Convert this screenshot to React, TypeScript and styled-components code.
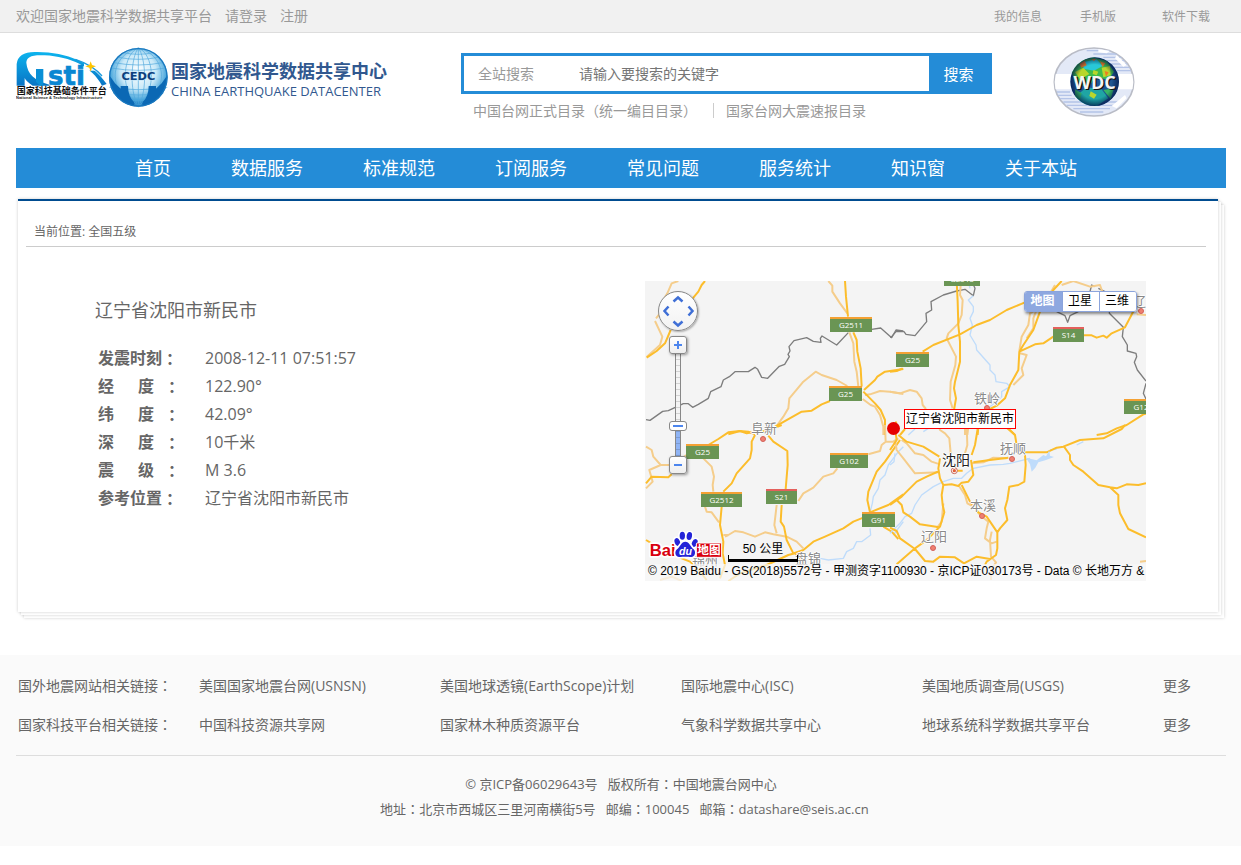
import React from "react";
import styled, { createGlobalStyle, css } from "styled-components";

const sans = `"Open Sans", "Noto Sans CJK SC", sans-serif`;
const arial = `"Liberation Sans", "Noto Sans CJK SC", sans-serif`;
const blue = "#248cd7";

const GlobalStyle = createGlobalStyle`
  *, *::before, *::after { box-sizing: border-box; }
  body { margin: 0; background: #fff; color: #666; font: 14px/20px ${sans}; }
  a { color: inherit; text-decoration: none; }
  ul { list-style: none; margin: 0; padding: 0; }
  p, h1 { margin: 0; }
  button, input, select { font-family: inherit; }
`;

/* Full-width punctuation centred in its box */
const Mark = styled.span`
  font-family: "Noto Sans CJK TC", sans-serif;
  line-height: 1;
`;

const TopBar = styled.div`
  display: flex;
  justify-content: space-between;
  height: 33px;
  padding: 0 31px 0 16px;
  background: #f1f1f1;
  border-bottom: 1px solid #ddd;
  color: #999;
  line-height: 32px;
  white-space: nowrap;
`;
const Greeting = styled.div`
  display: flex;
  gap: 13px;
`;
const TopLinks = styled.div`
  display: flex;
  gap: 38px;
  font-size: 12px;
  line-height: 34px;
  a:last-child { padding-left: 8px; }
`;

const Wrap = styled.div`
  padding: 0 15px 0 16px;
`;

const Header = styled.header`
  display: flex;
  height: 115px;
  padding-top: 14px;
`;
const Brand = styled.a`
  display: flex;
  gap: 3px;
  width: 445px;
  flex: none;
  white-space: nowrap;
`;
const BrandText = styled.span`
  display: flex;
  flex-direction: column;
  padding-top: 14px;
  color: #31588f;
`;
const BrandZh = styled.span`
  font-size: 18px;
  line-height: 20px;
  font-weight: 700;
`;
const BrandEn = styled.span`
  font: 13px/20px "Open Sans", sans-serif;
`;

const SearchArea = styled.div`
  flex: none;
  width: 531px;
  padding-top: 6px;
`;
const SearchForm = styled.form`
  display: flex;
  height: 41px;
  border: 3px solid ${blue};
  border-right: 0;
`;
const Scope = styled.select`
  appearance: none;
  width: 100px;
  padding: 0 0 0 14px;
  border: 0;
  background: #fff;
  color: #999;
  font-size: 14px;
`;
const Keyword = styled.input`
  flex: 1;
  min-width: 0;
  padding: 0 15px;
  border: 0;
  font-size: 14px;
  &::placeholder { color: #757575; }
`;
const SearchButton = styled.button`
  width: 63px;
  margin: -3px 0;
  padding: 0 4px 0 0;
  border: 0;
  background: ${blue};
  color: #fff;
  font-size: 15px;
`;
const QuickLinks = styled.ul`
  display: flex;
  padding: 7px 0 0 12px;
  color: #999;
  white-space: nowrap;
  li + li {
    margin-left: 16px;
  }
  li + li::before {
    content: "";
    display: inline-block;
    width: 1px;
    height: 15px;
    margin-right: 12px;
    background: #ccc;
    vertical-align: -2px;
  }
`;
const WdcLink = styled.a`
  margin-left: 60px;
  svg { display: block; }
`;

const Nav = styled.nav`
  display: flex;
  gap: 60px;
  height: 40px;
  padding-left: 119px;
  background: ${blue};
  color: #fff;
  font-size: 18px;
  line-height: 41px;
  white-space: nowrap;
`;

const Panel = styled.main`
  height: 413px;
  margin: 11px 8px 0 2px;
  padding: 0 12px 0 8px;
  border-top: 2px solid #004c90;
  background: #fff;
  box-shadow:
    0 0 3px rgba(0, 0, 0, 0.2),
    3px 3px 0 #fff,
    3px 3px 3px rgba(0, 0, 0, 0.2),
    6px 6px 0 #fff,
    6px 6px 3px rgba(0, 0, 0, 0.2);
`;
const Crumb = styled.div`
  height: 46px;
  padding: 21px 8px 0;
  border-bottom: 1px solid #ccc;
  font-size: 12px;
  line-height: 20px;
`;
const Columns = styled.div`
  display: flex;
  padding: 34px 60px 0 69px;
`;
const Info = styled.section`
  flex: 1;
`;
const Title = styled.h1`
  font-size: 18px;
  line-height: 28px;
  font-weight: 400;
  padding-top: 15px;
`;
const Facts = styled.table`
  margin: 20px 0 0 3px;
  border-collapse: collapse;
  font-size: 16px;
  line-height: 28px;
  th, td { height: 28px; padding: 0; text-align: left; }
  th { width: 107px; }
`;
const Label = styled.span`
  display: flex;
  align-items: center;
  height: 28px;
`;
const First = styled.span`
  margin-right: 24px;
`;
const Second = styled.span`
  margin-right: 10px;
`;

/* ---- map ---- */
const MapBox = styled.section`
  position: relative;
  flex: none;
  width: 501px;
  height: 300px;
  overflow: hidden;
  background: #f4f4f4;
  font-family: ${arial};
  > svg { display: block; }
`;
type At = { $x: number; $y: number };
const at = css<At>`
  position: absolute;
  left: ${(p) => p.$x}px;
  top: ${(p) => p.$y}px;
`;
const Sign = styled.span<At & { $w: number; $red?: boolean }>`
  ${at}
  width: ${(p) => p.$w}px;
  height: 15px;
  border-top: 2px solid ${(p) => (p.$red ? "#e4605c" : "#f4a133")};
  background: #6a9554;
  color: #fff;
  font: 8px/11px "Open Sans", sans-serif;
  text-align: center;
`;
const City = styled.span<At & { $major?: boolean }>`
  ${at}
  color: ${(p) => (p.$major ? "#222" : "#8a8a8a")};
  font-size: ${(p) => (p.$major ? 14 : 13)}px;
  line-height: 18px;
  white-space: nowrap;
  text-shadow: 1px 0 #fff, -1px 0 #fff, 0 1px #fff, 0 -1px #fff;
`;
const Dot = styled.i<At>`
  ${at}
  width: 6px;
  height: 6px;
  border: 1px solid #d2605a;
  border-radius: 50%;
  background: #f08070;
`;
const Epicentre = styled.i<At>`
  ${at}
  width: 13px;
  height: 13px;
  border-radius: 50%;
  background: #e60000;
`;
const Callout = styled.span<At>`
  ${at}
  padding: 1px;
  border: 1px solid #f00;
  background: #fff;
  color: #000;
  font-size: 12px;
  line-height: 16px;
  white-space: nowrap;
`;
const PanWheel = styled.div<At>`
  ${at}
  width: 40px;
  height: 40px;
  border: 1px solid #888;
  border-radius: 50%;
  background: linear-gradient(#fff, #f2f2f2);
  box-shadow: 1px 1px 2px rgba(0, 0, 0, 0.3);
`;
const PanButton = styled.button<At & { $turn: number }>`
  ${at}
  width: 12px;
  height: 12px;
  padding: 0;
  border: 0;
  background: none;
  svg { display: block; transform: rotate(${(p) => p.$turn}deg); }
`;
const ZoomButton = styled.button<At>`
  ${at}
  display: flex;
  align-items: center;
  justify-content: center;
  width: 18px;
  height: 18px;
  padding: 0;
  border: 1px solid #888;
  border-radius: 3px;
  background: linear-gradient(#fff, #eee);
  box-shadow: 1px 1px 3px rgba(0, 0, 0, 0.4);
`;
const ZoomSlider = styled.input<At>`
  ${at}
  appearance: none;
  writing-mode: vertical-lr;
  direction: rtl;
  width: 18px;
  height: 104px;
  margin: 0;
  background: none;
  &::-webkit-slider-runnable-track {
    width: 6px;
    height: 104px;
    border: solid #888;
    border-width: 0 1px;
    background:
      repeating-linear-gradient(transparent 0 5px, rgba(0, 0, 0, 0.14) 5px 6px),
      linear-gradient(#f4f4f4 0 72px, #8fb4f5 72px);
  }
  &::-webkit-slider-thumb {
    appearance: none;
    width: 18px;
    height: 10px;
    margin-left: -7px;
    border: 1px solid #888;
    border-radius: 3px;
    background: linear-gradient(#4d86ee, #4d86ee) center / 10px 2px no-repeat #fff;
  }
`;
const TypeSwitch = styled.div`
  position: absolute;
  top: 10px;
  right: 9px;
  display: flex;
  height: 21px;
  border: 1px solid #8ba4dc;
  border-radius: 3px;
  overflow: hidden;
  box-shadow: 1px 2px 3px rgba(0, 0, 0, 0.45);
`;
const TypeButton = styled.button<{ $on?: boolean }>`
  width: 37px;
  padding: 0 2px 0 0;
  border: 0;
  background: ${(p) => (p.$on ? "#8ea8e0" : "#fff")};
  color: ${(p) => (p.$on ? "#fff" : "#000")};
  font-size: 12px;
  line-height: 17px;
  font-weight: ${(p) => (p.$on ? 700 : 400)};
  & + & { border-left: 1px solid #8ba4dc; }
`;
const Scale = styled.div<At>`
  ${at}
  width: 70px;
  height: 22px;
  color: #000;
  font-size: 12px;
  line-height: 16px;
  text-align: center;
  &::after {
    content: "";
    display: block;
    height: 7px;
    margin-top: -2px;
    border: solid #000;
    border-width: 0 1px 3px;
  }
`;
const Copyright = styled.div`
  position: absolute;
  left: 0;
  right: 0;
  bottom: 0;
  height: 17px;
  padding-left: 3px;
  background: rgba(248, 248, 248, 0.72);
  color: #000;
  font-size: 12px;
  line-height: 15px;
  white-space: nowrap;
`;
const MapLogo = styled.svg<At>`
  ${at}
`;

/* ---- footer ---- */
const Footer = styled.footer`
  margin-top: 43px;
  height: 191px;
  padding: 11px 15px 0 16px;
  background: #fafafa;
`;
const LinkRow = styled.div`
  display: grid;
  grid-template-columns: 181fr 241fr 241fr 241fr 241fr 63fr;
  height: 39px;
  padding-left: 2px;
  line-height: 39px;
  white-space: nowrap;
`;
const Legal = styled.div`
  margin-top: 11px;
  padding-top: 16px;
  border-top: 1px solid #ddd;
  font-size: 13px;
  line-height: 25px;
  text-align: center;
  p { height: 25px; white-space: pre; }
`;

const yellow = "#fcbd2b";
const pale = "#f5cd8b";
const river = "#bfdcfb";

type Tile = { dx: number; dy: number; border: string; water: string; minor: string; major: string };

/* Map tiles, three drawing units to a screen pixel */
const tiles: Tile[] = [
  {
    dx: -15, dy: -18,
    border: "M18 434L30 436 68 409 85 407 130 386 145 386 158 397 175 388 205 370 212 350 243 335 250 315 268 305 285 290 325 290 345 277 353 283 365 307 383 310 418 274 434 268 448 245 444 238 450 228 447 215 462 197 500 188 520 199 543 202 541 190 546 183 590 210 625 173M695 163L722 159 755 188 768 165 790 168",
    water: "",
    minor: "M115 18L95 25 82 55 70 75 60 115 48 130M45 138L67 185 60 210 20 246M565 18L577 32 577 50 600 85 622 115M628 172L640 205 643 260 650 290 655 335M675 360L690 358 720 348 750 350 790 357M668 372L692 390 705 395 720 420 730 455 730 480M412 450L430 425 445 400 448 370 490 320 527 290 545 300 590 315 622 333",
    major: "M195 18L185 30 175 50 150 80M92 165L75 205 50 228 20 248M615 18L618 65 624 125M640 172L650 195 652 230 662 280 665 335M672 345L705 315 712 305 735 290 790 282M670 350L705 385 722 405 735 435 735 480M400 458L485 410 515 407 545 388 570 378M265 478L300 468 325 470 345 478",
  },
  {
    dx: 735, dy: -18,
    border: "M0 187L5 185 18 170 42 170 48 178 75 182 110 140 108 115 125 105 123 80 160 60 200 48 225 43 250 62 255 40 245 18M500 110L525 122 533 142 540 122 565 110M570 70L600 50 605 30 615 35M625 40L645 50 660 80 658 115 700 157 697 185 712 210 712 228 738 235 740 245 733 262 742 285 768 318M768 325L760 355 768 372",
    water: "M250 62L235 75 250 95 250 110 240 130 247 150 240 180 258 210 260 225 300 270 300 285 315 300 318 320 350 325 360 335 335 350 335 365 300 395M235 18L240 40M55 480L75 462M100 470L115 460",
    minor: "M212 30L210 60 218 75 215 120 205 145 175 175 170 190 198 245 196 270 182 320 180 375 188 400M495 30L460 90 420 115 415 150 395 185 388 228M445 90L430 130 430 160 410 190M390 235L410 240 395 280 400 300 370 330M0 350L30 355 60 345 80 350 95 370 98 390 108 402M515 30L550 18 600 35 630 30 640 60M740 118L768 120M225 455L225 480M235 455L232 480",
    major: "M200 18L203 80 205 150 210 200 210 260 195 320 192 340 198 370 192 405M0 290L20 288 38 280M98 230L130 210 210 178 260 150 300 135 350 105 405 82M515 18L490 45 450 110 430 165 400 210 388 230 385 285 360 330 345 370 320 392 300 402M388 230L435 208 460 205 490 185M582 181L605 181 620 188 640 182 650 188 665 175 705 157 735 100M790 410L760 418 710 450 680 460 650 475 620 480M265 455L263 480M30 480L45 462M355 460L375 480M0 460L20 440",
  },
  {
    dx: -15, dy: 432,
    border: "",
    water: "M790 65L775 80 760 100 745 120 735 150 720 165 715 190 700 215 697 235 690 262M690 310L692 330 665 350 650 350 640 370 620 380 610 400 565 405 540 400M760 330L790 290",
    minor: "M18 65L35 75 40 95 62 120 92 120 140 90M18 190L38 170 28 135 62 120M190 100L215 125 222 155 218 180 220 200M195 245L200 260 215 262 237 292M250 330L265 330 285 318 310 322 345 335 375 322 400 328 440 335 470 350 490 370M410 240L403 300 410 325M475 228L490 205 520 188 550 155 580 145 592 130M685 88L720 78 725 60 737 50 735 0M735 50L760 50 775 40M60 465L95 455 125 468M265 330L255 335",
    major: "M18 175L35 155 85 157 95 148M205 60L235 42 265 22 300 18 320 25 345 20 380 18 425 0M345 30L335 50 335 75 330 100 290 145 275 175 250 200M385 32L400 50 442 78 443 120 437 192M245 245L240 300 250 350 248 385 255 420 240 460M18 345L60 370 100 390 150 410 180 440 200 465M425 240L422 290 432 305 440 345 460 385 490 375 520 350 555 335 610 310 640 290 670 278M265 468L300 445 380 420 445 390 465 385 490 410 510 440M780 45L735 110 710 140 685 200 682 225 690 262 745 240 790 208M730 305L755 320 775 342",
  },
  {
    dx: 735, dy: 432,
    border: "",
    water: "M0 325L30 295 45 275 65 265 75 240 95 210 130 185 160 170 190 160 215 160 230 145 250 130 300 120 340 118 360 115 420 100M0 120L12 110 15 85M480 75L500 72M560 60L580 50",
    minor: "M15 45L20 75 40 100 75 145 147 142M35 45L50 55 75 85 100 90 125 110 150 118M145 0L150 15 165 25 178 40 182 85M230 0L232 60 225 85M245 115L280 112 310 98 350 100M205 180L225 210 232 235 250 245 270 270 295 290 290 310 285 340 305 355 320 350M305 320L300 345 303 395 318 412 303 435 303 465M160 235L155 290 140 310M750 410L768 408",
    major: "M25 30L50 50 100 65 148 95M15 10L20 45 0 75M265 0L255 60 245 90M250 112L300 105 355 98M405 82L470 82 500 68 520 65 570 45 640 40 695 12 705 0M352 10L375 30 380 60M405 90L407 120 403 170 385 180 358 185 352 225 345 250 352 285 330 310 322 322 322 370 318 390 290 410 285 420M522 65L540 90 540 105 550 120 580 140 625 180 660 187 685 210 685 240 690 265 715 312 768 337M660 187L680 190 710 178 745 180 768 175M150 100L145 130 150 160 160 180 185 178 205 183 215 173 235 170 250 150 243 105M148 138L110 155 80 170 35 215 0 240M160 180L155 210 158 240 163 262 150 305 110 345 75 370 20 418M20 225L35 240 40 262 60 275 90 298 148 307M0 308L20 318 30 340 75 372 105 408 130 410 150 395 195 397 222 415 260 395 300 402M215 180L240 230 265 262 290 275 322 322M198 137L218 137",
  },
];

function Terrain() {
  return (
    <svg width="501" height="300" viewBox="0 0 1503 900" fill="none" strokeLinejoin="round" aria-hidden="true">
      {tiles.map((t, i) => (
        <g key={i} transform={`translate(${t.dx} ${t.dy})`}>
          <path d={t.border} stroke="#7d7d7d" strokeWidth="4" />
          <path d={t.water} stroke={river} strokeWidth="4" />
          <path d={t.minor} stroke={pale} strokeWidth="6" />
          <path d={t.major} stroke={yellow} strokeWidth="6" />
        </g>
      ))}
      <path transform="translate(735 432)" fill={river} d="M408 98L440 106 460 90 468 94 478 76 480 92 492 96 466 106 445 112 436 128 425 140 420 118Z" />
      <circle cx="928" cy="569" r="9" fill="#fff" stroke="#c8665a" strokeWidth="3" />
      <circle cx="928" cy="569" r="5" fill="#e2603a" />
    </svg>
  );
}

const signs: [string, number, number, number, boolean?][] = [
  ["G2511", 185, 36, 42], ["G25", 184, 105, 33], ["G25", 251, 71, 33], ["G2515", 299, -10, 36],
  ["S14", 408, 46, 31, true], ["G12", 479, 118, 34], ["G25", 41, 163, 33], ["G2512", 56, 211, 41],
  ["S21", 121, 208, 31, true], ["G102", 185, 172, 38], ["G91", 217, 231, 33],
];
const cities: [string, number, number][] = [
  ["阜新", 106, 139], ["铁岭", 329, 109], ["抚顺", 355, 159],
  ["本溪", 325, 216], ["辽阳", 276, 247], ["锦州", 47, 271], ["盘锦", 150, 269], ["辽源", 488, 12],
];
const dots = [[115, 155], [339, 124], [364, 175], [334, 232], [285, 264], [493, 27]];
const pans: [string, number, number, number][] = [
  ["向上平移", 13, 1, 0], ["向右平移", 26, 13, 90], ["向下平移", 13, 26, 180], ["向左平移", 1, 13, 270],
];

function BaiduMap() {
  return (
    <MapBox aria-label="地图">
      <Terrain />
      {cities.map(([n, x, y]) => <City key={n} $x={x} $y={y}>{n}</City>)}
      <City $x={297} $y={170} $major>沈阳</City>
      {dots.map(([x, y]) => <Dot key={x} $x={x} $y={y} />)}
      {signs.map(([n, x, y, w, red]) => <Sign key={n + x} $x={x} $y={y} $w={w} $red={red}>{n}</Sign>)}
      <Epicentre $x={242} $y={141} />
      <Callout $x={259} $y={128}>辽宁省沈阳市新民市</Callout>

      <PanWheel $x={13} $y={10}>
        {pans.map(([label, x, y, turn]) => (
          <PanButton key={label} type="button" aria-label={label} $x={x} $y={y} $turn={turn}>
            <svg width="12" height="12" viewBox="0 0 24 24"><path d="M3 17L12 9l9 8" fill="none" stroke="#3f6fd6" strokeWidth="5" /></svg>
          </PanButton>
        ))}
      </PanWheel>
      <ZoomSlider type="range" aria-label="缩放级别" min={0} max={100} defaultValue={29} $x={24} $y={73} />
      <ZoomButton type="button" aria-label="放大" $x={24} $y={55}>
        <svg width="10" height="10"><path d="M1 5h8M5 1v8" stroke="#4d86ee" strokeWidth="2" /></svg>
      </ZoomButton>
      <ZoomButton type="button" aria-label="缩小" $x={24} $y={175}>
        <svg width="10" height="10"><path d="M1 5h8" stroke="#4d86ee" strokeWidth="2" /></svg>
      </ZoomButton>

      <TypeSwitch>
        <TypeButton type="button" $on>地图</TypeButton>
        <TypeButton type="button">卫星</TypeButton>
        <TypeButton type="button">三维</TypeButton>
      </TypeSwitch>

      <MapLogo $x={3} $y={250} width="76" height="30" viewBox="0 0 228 90">
        <g stroke="#fff" strokeWidth="10" strokeLinejoin="round" paintOrder="stroke">
          <text x="5" y="75" fill="#d9000f" fontFamily="Liberation Sans, sans-serif" fontWeight="700" fontSize="50">Bai</text>
          <g fill="#2424d8">
            <ellipse cx="88" cy="33" rx="8" ry="12" transform="rotate(-20 88 33)" />
            <ellipse cx="103" cy="14" rx="8" ry="12" />
            <ellipse cx="124" cy="15" rx="8" ry="12" transform="rotate(10 124 15)" />
            <ellipse cx="140" cy="36" rx="8" ry="12" transform="rotate(25 140 36)" />
            <path d="M112 32c12 0 16 16 25 23 8 8 4 24-8 23-8-1-26-1-34 0-13 1-17-15-8-23 9-7 13-23 25-23Z" />
          </g>
        </g>
        <text x="93" y="72" fill="#fff" fontFamily="Liberation Sans, sans-serif" fontWeight="700" fontStyle="italic" fontSize="32">du</text>
        <rect x="145" y="36" width="76" height="43" rx="3" fill="#d9000f" stroke="#fff" strokeWidth="3" />
        <text x="148" y="70" fill="#fff" fontFamily="Noto Sans CJK SC, sans-serif" fontWeight="700" fontSize="35">地图</text>
      </MapLogo>
      <Scale $x={83} $y={260}>50 公里</Scale>
      <Copyright>© 2019 Baidu - GS(2018)5572号 - 甲测资字1100930 - 京ICP证030173号 - Data © 长地万方 &amp;</Copyright>
    </MapBox>
  );
}

function BrandMark() {
  return (
    <svg width="152" height="62" viewBox="48 141 456 186" aria-hidden="true">
      <defs>
        <linearGradient id="nsti" x1="0" y1="0" x2="0" y2="1">
          <stop offset="0" stopColor="#0db4ee" />
          <stop offset="1" stopColor="#0874c4" />
        </linearGradient>
        <radialGradient id="ball" cx=".5" cy=".4" r=".6">
          <stop offset="0" stopColor="#ffffff" />
          <stop offset=".5" stopColor="#c9e9f8" />
          <stop offset=".8" stopColor="#4aa7dc" />
          <stop offset="1" stopColor="#0f6cb8" />
        </radialGradient>
      </defs>
      <path fill="url(#nsti)" d="M50 257V192Q54 156 104 156C196 154 276 186 320 252L306 257C276 200 212 170 134 166 92 164 80 172 79 188 82 222 104 242 148 254V257H98Q78 244 74 234V257Z" />
      <path fill="#0a8fd6" d="M108 207H130V257H120L108 246Z" />
      <text x="144" y="255" fill="#0a87d2" stroke="#0a87d2" strokeWidth="2" fontFamily="DejaVu Sans, sans-serif" fontWeight="700" fontSize="78">sti</text>
      <path fill="#fff" d="M252 182H288V212H252Z" />
      <path d="M226 178Q280 196 306 228" fill="none" stroke="#1a9bdc" strokeWidth="4" />
      <path fill="#ffc400" d="M272 184L276 195 288 199 276 203 272 215 268 203 256 199 268 195Z" />
      <text x="50" y="283" fill="#111" fontFamily="Noto Sans CJK SC, sans-serif" fontWeight="700" fontSize="27">国家科技基础条件平台</text>
      <text x="48" y="297" fill="#222" fontFamily="Liberation Sans, sans-serif" fontWeight="700" fontSize="12">National Science &amp; Technology Infrastructure</text>

      <circle cx="415" cy="232" r="88" fill="url(#ball)" />
      <g fill="none" stroke="#4fa8dc" strokeWidth="2">
        <path d="M415 144V320M415 144C370 160 356 270 415 320M415 144C460 160 474 270 415 320M415 144C330 165 315 275 415 320M415 144C500 165 515 275 415 320M415 144C394 170 386 270 415 320M415 144C436 170 444 270 415 320" />
        <path d="M370 158Q415 168 460 158M355 172Q415 184 475 172M342 188Q415 202 488 188M333 204Q415 218 497 204M328 262Q415 276 502 262M340 280Q415 290 490 280M365 298Q415 306 465 298" />
      </g>
      <path fill="#0b68b4" d="M328 226Q328 300 404 319L402 306Q384 290 384 258H362V266L345 250Z" />
      <path fill="#0b68b4" d="M502 226Q502 300 426 319L428 306Q446 290 446 258H468V266L485 250Z" />
      <circle cx="415" cy="232" r="86" fill="none" stroke="#1978bf" strokeWidth="4" />
      <text x="415" y="241" textAnchor="middle" fill="#0d3f7d" stroke="#bfe3f7" strokeWidth="3" paintOrder="stroke" fontFamily="DejaVu Sans, sans-serif" fontWeight="700" fontSize="34">CEDC</text>
    </svg>
  );
}

function WdcMark() {
  return (
    <svg width="84" height="72" viewBox="276 141 252 216" role="img" aria-label="WDC">
      <defs>
        <clipPath id="disc"><circle cx="404" cy="245" r="73" /></clipPath>
        <clipPath id="oval"><ellipse cx="402" cy="246" rx="118" ry="102" /></clipPath>
        <radialGradient id="shade">
          <stop offset=".7" stopColor="#001040" stopOpacity="0" />
          <stop offset="1" stopColor="#001040" stopOpacity=".7" />
        </radialGradient>
      </defs>
      <ellipse cx="402" cy="246" rx="119" ry="102" fill="#e3e9f7" stroke="#b9bcc6" strokeWidth="5" />
      <g clipPath="url(#oval)">
        <path d="M380 152H520M400 162H520M430 172H520M440 182H520M450 192H520M460 202H520M470 212H520M290 276H330M290 286H335M300 296H345M310 306H480M320 316H470M340 326H450M360 336H430" stroke="#b4c4e8" strokeWidth="4" />
        <path d="M280 222H528V268H280Z" fill="#fff" />
        <path d="M415 148L450 152 440 160 415 157ZM470 165L500 195 490 200 465 175ZM455 318L495 285 500 295 470 325Z" fill="#fff" />
      </g>
      <g clipPath="url(#disc)">
        <path d="M330 170H480V320H330Z" fill="#1f5590" />
        <path d="M335 215L345 195 365 180 400 172 440 182 462 215 445 240 415 232 400 240 385 262 345 250Z" fill="#3fbb4c" />
        <path d="M345 290L380 262 425 268 445 295 410 318 365 312Z" fill="#1fa5a4" />
        <path d="M372 186L410 178 428 198 402 212 370 206Z" fill="#28c8d8" />
        <path d="M345 216L370 203 388 222 360 238ZM425 203L450 198 452 226 430 232ZM392 274L410 284 402 296 388 288ZM400 210L415 215 410 226 398 222Z" fill="#b8d62c" />
        <path d="M358 192L374 182 380 196 364 203ZM420 184L436 190 428 201ZM434 213L446 217 438 230ZM395 178L408 176 402 184Z" fill="#ef7d22" />
        <path d="M345 268L365 280 360 300 345 290ZM430 270L462 265 452 297Z" fill="#37b565" />
        <circle cx="404" cy="245" r="73" fill="url(#shade)" />
      </g>
      <text x="408" y="270" textAnchor="middle" fill="#111" fontFamily="Open Sans, sans-serif" fontWeight="700" fontSize="54">WDC</text>
      <text x="404" y="266" textAnchor="middle" fill="#f4f4f4" fontFamily="Open Sans, sans-serif" fontWeight="700" fontSize="54">WDC</text>
    </svg>
  );
}

const navItems = ["首页", "数据服务", "标准规范", "订阅服务", "常见问题", "服务统计", "知识窗", "关于本站"];
const facts: [string, string][] = [
  ["发震时刻", "2008-12-11 07:51:57"], ["经度", "122.90°"], ["纬度", "42.09°"],
  ["深度", "10千米"], ["震级", "M 3.6"], ["参考位置", "辽宁省沈阳市新民市"],
];
const footerRows: [string, string[]][] = [
  ["国外地震网站相关链接", ["美国国家地震台网(USNSN)", "美国地球透镜(EarthScope)计划", "国际地震中心(ISC)", "美国地质调查局(USGS)", "更多"]],
  ["国家科技平台相关链接", ["中国科技资源共享网", "国家林木种质资源平台", "气象科学数据共享中心", "地球系统科学数据共享平台", "更多"]],
];

export default function App() {
  return (
    <>
      <GlobalStyle />
      <TopBar>
        <Greeting>
          <span>欢迎国家地震科学数据共享平台</span>
          <a href="#login">请登录</a>
          <a href="#register">注册</a>
        </Greeting>
        <TopLinks>
          <a href="#me">我的信息</a>
          <a href="#mobile">手机版</a>
          <a href="#download">软件下载</a>
        </TopLinks>
      </TopBar>

      <Wrap>
        <Header>
          <Brand href="#home">
            <BrandMark />
            <BrandText>
              <BrandZh>国家地震科学数据共享中心</BrandZh>
              <BrandEn>CHINA EARTHQUAKE DATACENTER</BrandEn>
            </BrandText>
          </Brand>
          <SearchArea>
            <SearchForm>
              <Scope aria-label="搜索范围"><option>全站搜索</option></Scope>
              <Keyword aria-label="关键字" placeholder="请输入要搜索的关键字" />
              <SearchButton type="button">搜索</SearchButton>
            </SearchForm>
            <QuickLinks>
              <li><a href="#catalog">中国台网正式目录<Mark>（</Mark>统一编目目录<Mark>）</Mark></a></li>
              <li><a href="#rapid">国家台网大震速报目录</a></li>
            </QuickLinks>
          </SearchArea>
          <WdcLink href="#wdc"><WdcMark /></WdcLink>
        </Header>

        <Nav>{navItems.map((n) => <a key={n} href="#nav">{n}</a>)}</Nav>

        <Panel>
          <Crumb>当前位置: 全国五级</Crumb>
          <Columns>
            <Info>
              <Title>辽宁省沈阳市新民市</Title>
              <Facts>
                <tbody>
                  {facts.map(([k, v]) => (
                    <tr key={k}>
                      <th scope="row">
                        <Label>
                          {k.length === 2
                            ? <><First>{k[0]}</First><Second>{k[1]}</Second></>
                            : k}
                          <Mark>：</Mark>
                        </Label>
                      </th>
                      <td>{v}</td>
                    </tr>
                  ))}
                </tbody>
              </Facts>
            </Info>
            <BaiduMap />
          </Columns>
        </Panel>
      </Wrap>

      <Footer>
        {footerRows.map(([head, links]) => (
          <LinkRow key={head}>
            <span>{head}<Mark>：</Mark></span>
            {links.map((l) => <a key={l} href="#link">{l}</a>)}
          </LinkRow>
        ))}
        <Legal>
          <p>© 京ICP备06029643号   版权所有<Mark>：</Mark>中国地震台网中心</p>
          <p>  地址<Mark>：</Mark>北京市西城区三里河南横街5号   邮编<Mark>：</Mark>100045   邮箱<Mark>：</Mark>datashare@seis.ac.cn</p>
        </Legal>
      </Footer>
    </>
  );
}
